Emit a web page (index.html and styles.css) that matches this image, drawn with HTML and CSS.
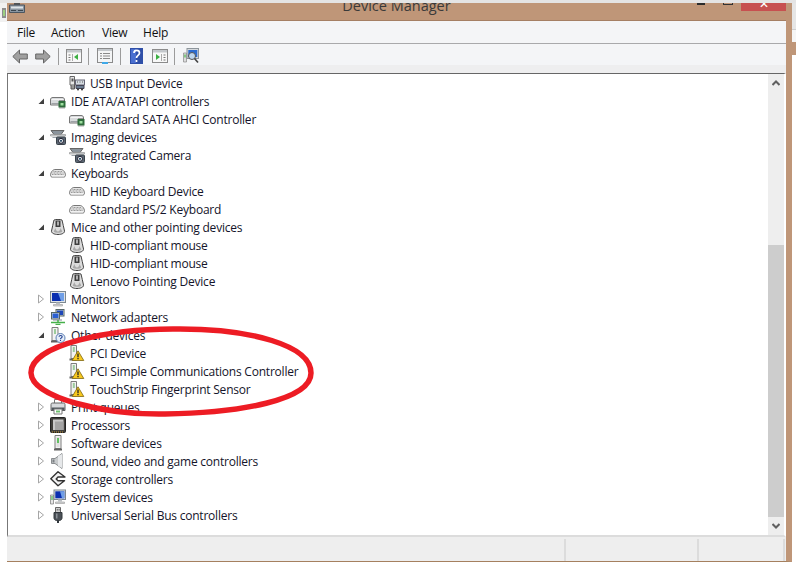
FILE: index.html
```html
<!DOCTYPE html>
<html lang="en">
<head>
<meta charset="utf-8">
<title>Device Manager</title>
<link rel="stylesheet" href="styles.css">
</head>
<body>
<svg class="defs" width="0" height="0" aria-hidden="true">
  <defs>
    <symbol id="open" viewBox="0 0 8 8"><path d="M7 1.500V7H1.500z" fill="#404040"/></symbol>
    <symbol id="closed" viewBox="0 0 8 10"><path d="M1.500 1v8L6.500 5z" fill="#fff" stroke="#a6a6a6"/></symbol>
    <symbol id="drive" viewBox="0 0 16 16"><path d="M.5 7C.5 5 1.500 4.500 3 4.500h9c1.500 0 2.500.5 2.500 2.500v5H.5z" fill="#d9dbdd" stroke="#777"/><path d="M1.500 6.500h12" stroke="#f4f4f4"/><path d="M1.500 10.500h11" stroke="#9ea2a6"/><rect x="8.500" y="8" width="7" height="6.500" fill="#2f6d3c"/><path d="M10 7v1M12 7v1M14 7v1M10 14.500v1M12 14.500v1M14 14.500v1" stroke="#555"/><rect x="10.500" y="10" width="3" height="2.500" fill="#9fe0a0"/></symbol>
    <symbol id="usbinput" viewBox="0 0 16 16"><path d="M1 1.500h4.500v8.500H1z" fill="#e8e8e8" stroke="#666"/><path d="M2.500 3.500h2v3h-2z" fill="#555"/><path d="M2 10v4h3.500v-4" fill="#999" stroke="#555"/><rect x="6.500" y="5" width="9" height="5" fill="#d5dce2" stroke="#667"/><path d="M8 7h1M10.500 7h1M13 7h1" stroke="#555"/><path d="M7 10.500h8v3H7z" fill="#6b7d92" stroke="#445"/><circle cx="9" cy="14.500" r="1" fill="#333"/><circle cx="13" cy="14.500" r="1" fill="#333"/></symbol>
    <symbol id="camera" viewBox="0 0 16 16"><path d="M1 1.500h13l-3 4H4z" fill="#8b949c" stroke="#666"/><path d="M.5 5.500h15v1.500H.5z" fill="#d8dcdf" stroke="#888" stroke-width=".6"/><path d="M2 8h5v1H3z" fill="#9ba3aa"/><rect x="6.500" y="8" width="9" height="7.500" rx="1" fill="#5b6672" stroke="#3a424a"/><circle cx="11" cy="11.800" r="2.500" fill="#eef2f5" stroke="#223"/><circle cx="11" cy="11.800" r="1.100" fill="#24455f"/></symbol>
    <symbol id="keyboard" viewBox="0 0 16 16"><path d="M.5 10.500C.5 7 3 4.500 5 4.500h6c2 0 4.500 2.500 4.500 6 0 .8-.8 1.500-1.500 1.500H2C1.300 12 .5 11.300.5 10.500z" fill="#e6e6e6" stroke="#777"/><path d="M3.500 6.500h9M2.500 8h11M2 9.500h12" stroke="#9a9a9a" stroke-dasharray="1 .5"/><path d="M2 11h12" stroke="#fff"/></symbol>
    <symbol id="mouse" viewBox="0 0 16 16"><path d="M4 1C6 .2 10 .2 12 1c.6 3.500 2 7.500 2.500 11 .2 2-2.500 3.500-6.500 3.500S1.300 14 1.500 12C2 8.500 3.400 4.500 4 1z" fill="#dcdcdc" stroke="#444"/><path d="M5.500 1.500h5v6.500h-5z" fill="#3e3e3e"/><path d="M7.300 2.500h1.400v4H7.300z" fill="#e2e2e2"/><path d="M5.500 9c.5 4.500 4.500 4.500 5 0l1.800 3.500c-1 1.800-7.600 1.800-8.600 0z" fill="#a8a8a8"/></symbol>
    <symbol id="monitor" viewBox="0 0 16 16"><rect x=".5" y=".5" width="15" height="11" fill="#dfe3e6" stroke="#7d8890"/><rect x="2" y="2" width="12" height="8" fill="#0a2fb0"/><path d="M8 2h6v8h-3z" fill="#6f9ee6"/><path d="M6 11.500h4v1.500H6z" fill="#b9bec2"/><path d="M3.500 13.500h9v1.500h-9z" fill="#d4d6d8" stroke="#999" stroke-width=".6"/></symbol>
    <symbol id="network" viewBox="0 0 16 16"><rect x="6" y=".5" width="8" height="6.500" fill="#c9d2db" stroke="#566"/><rect x="7" y="1.500" width="6" height="4.500" fill="#1d47b8"/><rect x="1.500" y="3.500" width="8" height="6.500" fill="#d5dce2" stroke="#566"/><rect x="2.500" y="4.500" width="6" height="4.500" fill="#2a5fd0"/><path d="M3 11h9" stroke="#889"/><path d="M1 13.500h14" stroke="#46b04a" stroke-width="1.500"/><path d="M8 11v2M5.500 15.500h5" stroke="#46b04a" stroke-width="1.500"/></symbol>
    <symbol id="software" viewBox="0 0 16 16"><path d="M5 .5h6v13H5z" fill="#f2f2f2" stroke="#7d7d7d"/><path d="M6.500 2h3v10h-3z" fill="#dedede"/><path d="M7 3h2v5H7z" fill="#63c063"/><path d="M4 13.500h8v2H4z" fill="#606060"/></symbol>
    <symbol id="other" viewBox="0 0 16 16"><path d="M2 .5h6v13H2z" fill="#f2f2f2" stroke="#7d7d7d"/><path d="M4 2h2v5H4z" fill="#9ccc9c"/><path d="M1 13.500h8v2H1z" fill="#606060"/><circle cx="10.500" cy="11" r="4.500" fill="#e6eef8" stroke="#5b7fb5"/><path d="M9 9.700c.2-1.700 3.200-1.700 3.200 0 0 1.200-1.700 1.200-1.700 2.500M10.500 13v1" fill="none" stroke="#1f3f90" stroke-width="1.100"/></symbol>
    <symbol id="warn" viewBox="0 0 16 16"><path d="M2 .5h5.500v13H2z" fill="#f2f2f2" stroke="#7d7d7d"/><path d="M3.800 2h2v5h-2z" fill="#9ccc9c"/><path d="M.5 13.500h7v2h-7z" fill="#606060"/><path d="M9 5.800l5.800 9.700H3.200z" fill="#f7c81e" stroke="#7d6612" stroke-linejoin="round" stroke-width=".8"/><path d="M9 8.500v3.700M9 13v1.300" stroke="#222" stroke-width="1.300"/></symbol>
    <symbol id="printer" viewBox="0 0 16 16"><path d="M4.500.5h7v4h-7z" fill="#fff" stroke="#777"/><path d="M1 5.500c0-1 .5-1.500 1.500-1.500h11c1 0 1.500.5 1.500 1.500v6H1z" fill="#d7d9dc" stroke="#666"/><path d="M1.500 8.500h13v3h-13z" fill="#50565c"/><path d="M4 10h8v5H4z" fill="#fff" stroke="#777"/><path d="M6 11.500h4v2H6z" fill="#6fc070"/></symbol>
    <symbol id="cpu" viewBox="0 0 16 16"><rect x=".5" y=".5" width="15" height="15" rx="1" fill="#403f3c" stroke="#222"/><rect x="3" y="2.500" width="10.500" height="10.500" fill="#c9c9c9"/><path d="M5 4.500h8.500V13H5z" fill="#a4a4a4"/><path d="M2 15h12" stroke="#c89a3c" stroke-dasharray="1 1"/></symbol>
    <symbol id="speaker" viewBox="0 0 16 16"><path d="M1.500 5.500H5L12 .5v15L5 10.500H1.500z" fill="#c8cbcd" stroke="#8a8d90"/><path d="M8 3v10L12 15V1z" fill="#e6e8ea"/><path d="M2.500 6.500h2v3h-2z" fill="#7c8084"/></symbol>
    <symbol id="storage" viewBox="0 0 16 16"><path d="M8 .8L.8 7.800l7.200 7 6.500-5H8L6.200 8l1.800-2h7z" fill="#f4f4f4" stroke="#333" stroke-width="1.400" stroke-linejoin="round"/></symbol>
    <symbol id="system" viewBox="0 0 16 16"><path d="M.5 6h3v9h-3z" fill="#e6e6e6" stroke="#777" stroke-width=".7"/><path d="M1.300 7h1.400v4H1.300z" fill="#5fc060"/><rect x="4" y="1" width="11.500" height="9.500" fill="#dde1e4" stroke="#7d8890"/><rect x="5.300" y="2.300" width="9" height="7" fill="#0a2fb0"/><path d="M10 2.300h4.300v7H12z" fill="#6f9ee6"/><path d="M8 10.500h4v2H8z" fill="#b9bec2"/><path d="M5.500 13h9v1.500h-9z" fill="#d4d6d8" stroke="#999" stroke-width=".6"/></symbol>
    <symbol id="usb" viewBox="0 0 16 16"><path d="M5.500.5h5v5h-5z" fill="#cfcfcf" stroke="#666"/><path d="M6.800 2h1v1.500h-1zM8.600 2h1v1.500h-1z" fill="#666"/><path d="M4 5.500h8V11c0 1.500-1.500 2.500-2.500 2.500h-3C5.500 13.500 4 12.500 4 11z" fill="#4b5157" stroke="#33383d"/><path d="M6 6.500h1.500v5H6z" fill="#8a9096"/><path d="M7 13.500h2V16H7z" fill="#33383d"/></symbol>
  </defs>
</svg>

<div class="top-strip"></div>
<div class="desk">
  <aside class="bg-left">
    <svg class="bg-left-icon" width="4" height="10" viewBox="0 0 4 10"><rect width="4" height="10" fill="#8d8d8d"/><rect x="1" y="2" width="2" height="6" fill="#9ccf80"/></svg>
  </aside>

  <main class="window">
    <header class="titlebar">
      <svg class="app-icon" width="16" height="10" viewBox="0 0 16 10"><path d="M5 0h6v2H5z" fill="#555"/><path d="M.5 2h15v7.500H.5z" fill="#8a95a0" stroke="#4c5660"/><path d="M2 3.500h12v2H2z" fill="#dfe4e8"/><path d="M2 7h5v1H2zM9 7h5v1H9z" fill="#3d464e"/></svg>
      <div class="title">Device Manager</div>
      <div class="controls">
        <span class="ctl-min"></span>
        <span class="ctl-max"></span>
        <span class="ctl-close">✕</span>
      </div>
    </header>

    <nav class="menubar">
      <span class="menu-file">File</span>
      <span class="menu-action">Action</span>
      <span class="menu-view">View</span>
      <span class="menu-help">Help</span>
    </nav>

    <div class="toolbar">
      <svg class="tb tb-back" width="16" height="15" viewBox="0 0 16 15"><path d="M7.500 1L.8 7.500l6.700 6.500V10H15.300V5H7.500z" fill="#a0a0a0" stroke="#666"/></svg>
      <svg class="tb tb-fwd" width="16" height="15" viewBox="0 0 16 15"><path d="M8.500 1l6.700 6.500L8.500 14V10H.7V5h7.800z" fill="#a0a0a0" stroke="#666"/></svg>
      <span class="sep sep-1"></span>
      <svg class="tb tb-a" width="16" height="14" viewBox="0 0 16 14"><rect x=".5" y=".5" width="15" height="13" fill="#f8f8f8" stroke="#8b8b8b"/><path d="M1 1h14v2.500H1z" fill="#c4c8cc"/><path d="M2.500 5.500h2v1h-2zM2.500 8h2v1h-2zM2.500 10.500h2v1h-2z" fill="#777"/><path d="M6.500 5v7" stroke="#aaa"/><path d="M12 5v6L8 8z" fill="#3cb043"/></svg>
      <span class="sep sep-2"></span>
      <svg class="tb tb-b" width="16" height="16" viewBox="0 0 16 16"><rect x=".5" y=".5" width="15" height="14" fill="#f4f5f6" stroke="#8b8b8b"/><path d="M1 1h14v2H1z" fill="#c4c8cc"/><path d="M3 5h2v1H3zM6 5h7v1H6zM3 7.500h2v1H3zM6 7.500h7v1H6zM3 10h2v1H3zM6 10h7v1H6z" fill="#8a8a8a"/><path d="M5 14h6v2H5z" fill="#3fa9e8"/></svg>
      <span class="sep sep-3"></span>
      <svg class="tb tb-help" width="13" height="16" viewBox="0 0 13 16"><rect width="13" height="16" fill="#2f4fa8"/><rect x="1" y="1" width="5" height="14" fill="#4a6fd0"/><path d="M4 5c0-3.500 5.500-3.500 5.500 0 0 2.300-3 2.500-3 5M6.500 12v2" fill="none" stroke="#fff" stroke-width="1.700"/></svg>
      <svg class="tb tb-c" width="16" height="14" viewBox="0 0 16 14"><rect x=".5" y=".5" width="15" height="13" fill="#f8f8f8" stroke="#8b8b8b"/><path d="M1 1h14v2.500H1z" fill="#c4c8cc"/><path d="M11.500 5.500h2v1h-2zM11.500 8h2v1h-2zM11.500 10.500h2v1h-2z" fill="#777"/><path d="M9.500 5v7" stroke="#aaa"/><path d="M4 5v6l4-3z" fill="#3cb043"/></svg>
      <span class="sep sep-4"></span>
      <svg class="tb tb-d" width="16" height="16" viewBox="0 0 16 16"><path d="M.5 5h3v9h-3z" fill="#ddd" stroke="#888" stroke-width=".7"/><path d="M1.300 6.500h1.400v3H1.300z" fill="#5fc060"/><rect x="4" y=".5" width="11.500" height="10" fill="#d6dade" stroke="#8d959c"/><rect x="5.300" y="2" width="9" height="7" fill="#2a6bd0"/><circle cx="9" cy="8" r="3.500" fill="#bcd6ee" stroke="#555"/><path d="M11.500 10.500l3.500 4" stroke="#444" stroke-width="1.600"/></svg>
    </div>
    <div class="toolband"></div>

    <section class="tree-frame">
      <div class="tree">
        <div class="row d1"><svg class="ico"><use href="#usbinput"/></svg><span>USB Input Device</span></div>
        <div class="row"><svg class="tw"><use href="#open"/></svg><svg class="ico"><use href="#drive"/></svg><span>IDE ATA/ATAPI controllers</span></div>
        <div class="row d1"><svg class="ico"><use href="#drive"/></svg><span>Standard SATA AHCI Controller</span></div>
        <div class="row"><svg class="tw"><use href="#open"/></svg><svg class="ico"><use href="#camera"/></svg><span>Imaging devices</span></div>
        <div class="row d1"><svg class="ico"><use href="#camera"/></svg><span>Integrated Camera</span></div>
        <div class="row"><svg class="tw"><use href="#open"/></svg><svg class="ico"><use href="#keyboard"/></svg><span>Keyboards</span></div>
        <div class="row d1"><svg class="ico"><use href="#keyboard"/></svg><span>HID Keyboard Device</span></div>
        <div class="row d1"><svg class="ico"><use href="#keyboard"/></svg><span>Standard PS/2 Keyboard</span></div>
        <div class="row"><svg class="tw"><use href="#open"/></svg><svg class="ico"><use href="#mouse"/></svg><span>Mice and other pointing devices</span></div>
        <div class="row d1"><svg class="ico"><use href="#mouse"/></svg><span>HID-compliant mouse</span></div>
        <div class="row d1"><svg class="ico"><use href="#mouse"/></svg><span>HID-compliant mouse</span></div>
        <div class="row d1"><svg class="ico"><use href="#mouse"/></svg><span>Lenovo Pointing Device</span></div>
        <div class="row"><svg class="tw"><use href="#closed"/></svg><svg class="ico"><use href="#monitor"/></svg><span>Monitors</span></div>
        <div class="row"><svg class="tw"><use href="#closed"/></svg><svg class="ico"><use href="#network"/></svg><span>Network adapters</span></div>
        <div class="row"><svg class="tw"><use href="#open"/></svg><svg class="ico"><use href="#other"/></svg><span>Other devices</span></div>
        <div class="row d1"><svg class="ico"><use href="#warn"/></svg><span>PCI Device</span></div>
        <div class="row d1"><svg class="ico"><use href="#warn"/></svg><span>PCI Simple Communications Controller</span></div>
        <div class="row d1"><svg class="ico"><use href="#warn"/></svg><span>TouchStrip Fingerprint Sensor</span></div>
        <div class="row"><svg class="tw"><use href="#closed"/></svg><svg class="ico"><use href="#printer"/></svg><span>Print queues</span></div>
        <div class="row"><svg class="tw"><use href="#closed"/></svg><svg class="ico"><use href="#cpu"/></svg><span>Processors</span></div>
        <div class="row"><svg class="tw"><use href="#closed"/></svg><svg class="ico"><use href="#software"/></svg><span>Software devices</span></div>
        <div class="row"><svg class="tw"><use href="#closed"/></svg><svg class="ico"><use href="#speaker"/></svg><span>Sound, video and game controllers</span></div>
        <div class="row"><svg class="tw"><use href="#closed"/></svg><svg class="ico"><use href="#storage"/></svg><span>Storage controllers</span></div>
        <div class="row"><svg class="tw"><use href="#closed"/></svg><svg class="ico"><use href="#system"/></svg><span>System devices</span></div>
        <div class="row"><svg class="tw"><use href="#closed"/></svg><svg class="ico"><use href="#usb"/></svg><span>Universal Serial Bus controllers</span></div>
      </div>
      <div class="scrollbar">
        <div class="sb-btn"><svg width="8" height="6" viewBox="0 0 8 6"><path d="M.5 5L4 1.500 7.500 5" fill="none" stroke="#606060" stroke-width="2"/></svg></div>
        <div class="sb-space"></div>
        <div class="sb-thumb"></div>
        <div class="sb-btn"><svg width="8" height="6" viewBox="0 0 8 6"><path d="M.5 1L4 4.500 7.500 1" fill="none" stroke="#606060" stroke-width="2"/></svg></div>
      </div>
    </section>

    <footer class="statusbar">
      <div class="st st-1"></div>
      <div class="st st-2"></div>
      <div class="st st-3"></div>
    </footer>
  </main>

  <aside class="bg-right">
    <div class="br-a"></div>
    <div class="br-b"></div>
    <div class="br-c"></div>
  </aside>
</div>

<svg class="annotation" width="796" height="562" viewBox="0 0 796 562" aria-hidden="true">
  <path d="M180 329C110 328 30 345 31 373C32 398 105 415 165 414C240 413 311 400 311 373C311 345 250 329 180 329Z" fill="none" stroke="#ed1c24" stroke-width="5.500"/>
</svg>
</body>
</html>
```

FILE: styles.css
```css
* { box-sizing: border-box; }

html, body { margin: 0; padding: 0; }

body {
  position: relative;
  width: 796px;
  height: 562px;
  overflow: hidden;
  background: #fff;
  font-family: "Open Sans", "Noto Sans", "Liberation Sans", sans-serif;
  font-size: 12px;
  letter-spacing: -0.22px;
  color: #14142a;
  display: flex;
  flex-direction: column;
}

.defs { position: absolute; }

.top-strip { height: 3px; flex: none; background: #e4e4e4; }

.desk { flex: 1; display: flex; min-height: 0; }

.bg-left {
  width: 7px;
  flex: none;
  height: 19px;
  background: #f1f1f1;
  padding: 5px 0 0 2px;
}
.bg-left-icon { display: block; }

.bg-right { width: 4px; flex: none; display: flex; flex-direction: column; }
.br-a { height: 27px; background: #e6e6e6; border-bottom: 1px solid #cfcfcf; }
.br-b { height: 12px; background: #f6f6f6; }
.br-c { height: 13px; background: #bf9678; }

.window {
  flex: 1;
  min-width: 0;
  display: flex;
  flex-direction: column;
  background: #bf9678;
  border-right: 6px solid #bf9678;
  border-bottom: 1px solid #a5805f;
}

.titlebar {
  height: 18px;
  flex: none;
  display: grid;
  grid-template-columns: 1fr auto 1fr;
  border-bottom: 1px solid #a57f64;
  overflow: hidden;
}

.app-icon { display: block; margin-left: 2px; }

.title {
  font-size: 14.500px;
  letter-spacing: 0;
  line-height: 6px;
  color: #3a3a3a;
  white-space: nowrap;
}

.controls { display: flex; justify-content: flex-end; align-items: flex-start; }
.ctl-min { width: 8px; height: 2px; background: #2b2b2b; margin-right: 18px; }
.ctl-max { width: 10px; height: 2px; border: 1px solid #333; border-top: 0; margin-right: 8px; }
.ctl-close {
  width: 45px;
  height: 8px;
  background: #c75050;
  color: #fff;
  font-size: 12px;
  line-height: 1px;
  text-align: center;
  overflow: hidden;
}

.menubar {
  height: 23px;
  flex: none;
  background: #f4f5f7;
  border-bottom: 1px solid #a9a9ab;
  display: flex;
  align-items: center;
  padding-left: 10px;
  color: #111;
}
.menu-file { width: 34px; }
.menu-action { width: 51px; }
.menu-view { width: 41px; }

.toolbar {
  height: 21px;
  flex: none;
  background: #f4f5f7;
  display: flex;
  align-items: center;
  padding: 3px 0 0 5px;
}
.tb { display: block; flex: none; }
.tb-fwd { margin-left: 7px; }
.sep { width: 1px; height: 17px; background: #9b9b9b; flex: none; }
.sep-1 { margin-left: 7px; }
.tb-a { margin-left: 7px; }
.sep-2 { margin-left: 6px; }
.tb-b { margin-left: 8px; }
.sep-3 { margin-left: 7px; }
.tb-help { margin-left: 9px; }
.tb-c { margin-left: 9px; }
.sep-4 { margin-left: 6px; }
.tb-d { margin-left: 8px; }

.toolband { height: 8px; flex: none; background: #eeeeef; }

.tree-frame {
  height: 464px;
  flex: none;
  display: flex;
  background: #fff;
  border-top: 1px solid #666;
  border-left: 1px solid #777;
  border-right: 2px solid #fff;
  border-bottom: 2px solid #dcdcdc;
}

.tree { flex: 1; min-width: 0; overflow: hidden; }

.row {
  height: 18px;
  display: flex;
  align-items: center;
  white-space: nowrap;
  padding-left: 29px;
}
.row.d1 { padding-left: 61px; }
.row .ico { width: 16px; height: 16px; flex: none; margin-right: 5px; }
.row .tw { width: 8px; height: 10px; flex: none; margin-right: 5px; }

.scrollbar {
  width: 16px;
  flex: none;
  display: flex;
  flex-direction: column;
  background: #eeeeee;
}
.sb-btn { height: 18px; flex: none; display: flex; align-items: center; justify-content: center; }
.sb-space { height: 153px; flex: none; }
.sb-thumb { flex: 1; background: #cdcdcd; }

.statusbar {
  flex: 1;
  background: #eeeeee;
  display: flex;
  padding: 2px 0 0 0;
}
.st { border-right: 2px solid #dcdcdc; }
.st-1 { width: 559px; }
.st-2 { width: 133px; }
.st-3 { width: 86px; }

.annotation { position: absolute; left: 0; top: 0; pointer-events: none; }
```
